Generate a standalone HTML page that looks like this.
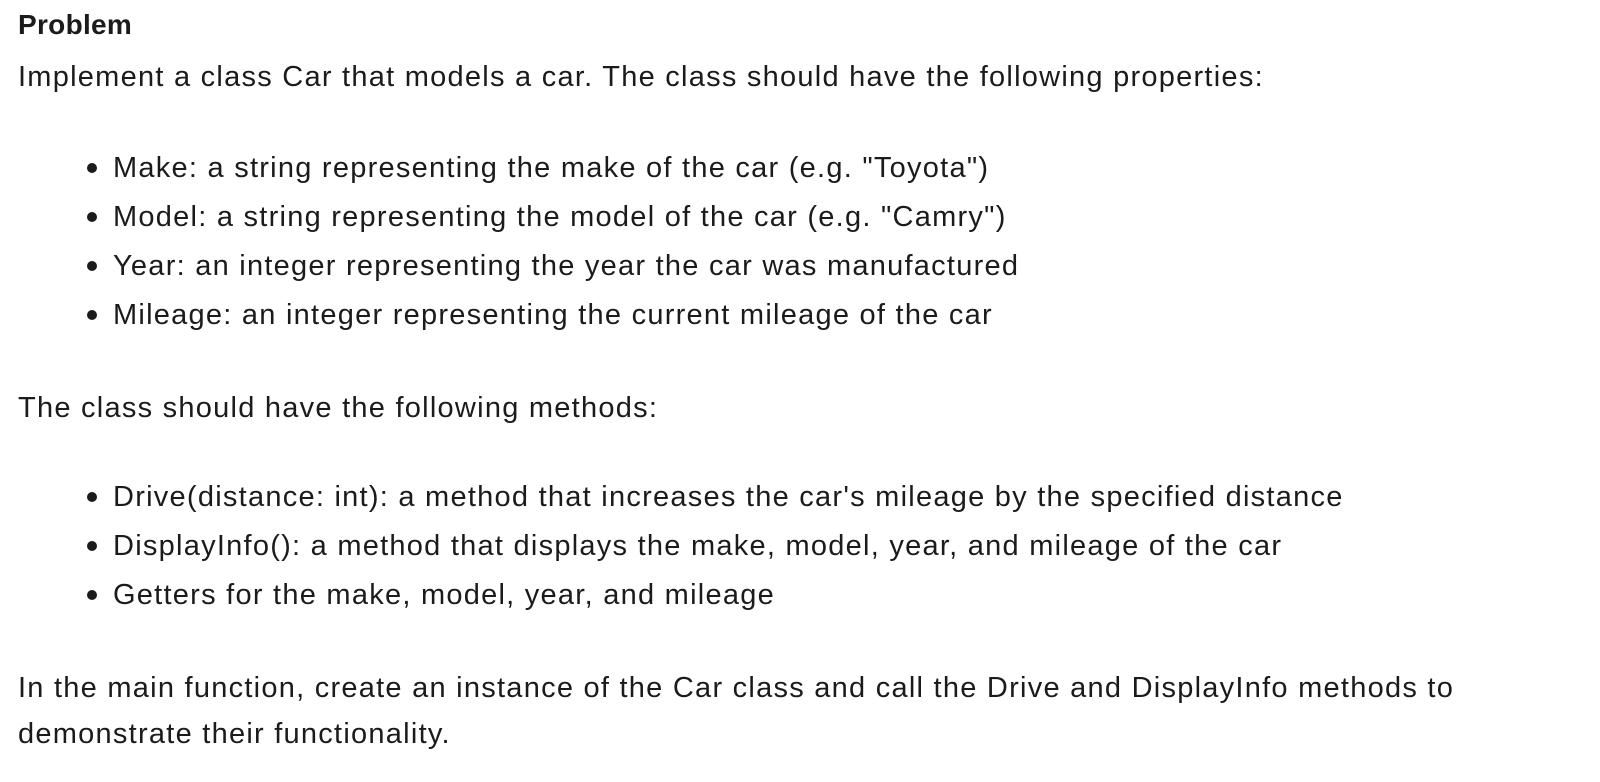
<!DOCTYPE html>
<html><head><meta charset="utf-8"><style>
html,body{margin:0;padding:0;background:#fff;width:1600px;height:782px;overflow:hidden}
body{font-family:"Liberation Sans",sans-serif;color:#1b1b1b;font-size:29px;letter-spacing:1.25px;position:relative}
.l{position:absolute;left:18px;white-space:nowrap;line-height:40px;height:40px}
.b{left:113px}
.d{position:absolute;left:87px;width:10px;height:10px;border-radius:50%;background:#1b1b1b}
</style></head><body>
<div class="l" style="top:5px;font-weight:bold;font-size:28px;letter-spacing:0.3px">Problem</div>
<div class="l" style="top:57px">Implement a class Car that models a car. The class should have the following properties:</div>
<div class="d" style="top:163px"></div><div class="l b" style="top:148px">Make: a string representing the make of the car (e.g. "Toyota")</div>
<div class="d" style="top:212px"></div><div class="l b" style="top:197px">Model: a string representing the model of the car (e.g. "Camry")</div>
<div class="d" style="top:261px"></div><div class="l b" style="top:246px">Year: an integer representing the year the car was manufactured</div>
<div class="d" style="top:310px"></div><div class="l b" style="top:295px">Mileage: an integer representing the current mileage of the car</div>
<div class="l" style="top:388px">The class should have the following methods:</div>
<div class="d" style="top:492px"></div><div class="l b" style="top:477px">Drive(distance: int): a method that increases the car's mileage by the specified distance</div>
<div class="d" style="top:541px"></div><div class="l b" style="top:526px">DisplayInfo(): a method that displays the make, model, year, and mileage of the car</div>
<div class="d" style="top:590px"></div><div class="l b" style="top:575px">Getters for the make, model, year, and mileage</div>
<div class="l" style="top:668px">In the main function, create an instance of the Car class and call the Drive and DisplayInfo methods to</div>
<div class="l" style="top:714px">demonstrate their functionality.</div>
</body></html>
